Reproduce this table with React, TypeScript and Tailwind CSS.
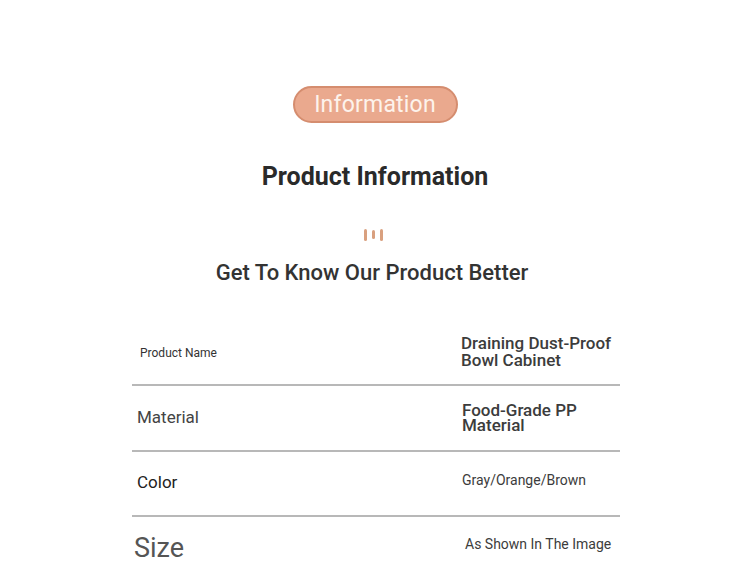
const rows = [
  { label: "Product Name", labelCls: "text-[12px] pl-2 mb-[4px] text-[#333]", value: "Draining Dust-Proof Bowl Cabinet", valueCls: "text-[17px] font-medium leading-[17px] w-[160px] pl-[1px] mb-[6px]", h: "h-[60px]" },
  { label: "Material", labelCls: "text-[17px] pl-[5px] text-[#444]", value: "Food-Grade PP Material", valueCls: "text-[17px] font-medium leading-[15px] w-[130px] pl-[2px]", h: "h-[66px]" },
  { label: "Color", labelCls: "text-[17px] pl-[5px] mb-[2px] text-[#222]", value: "Gray/Orange/Brown", valueCls: "text-[14px] pl-[2px] mb-[6px]", h: "h-[65px]" },
  { label: "Size", labelCls: "text-[27px] pl-[2px] text-[#555]", value: "As Shown In The Image", valueCls: "text-[14px] pl-[5px] mb-[8px]", h: "h-[62px]" },
];

export default function App() {
  return (
    <div className="w-[750px] h-[574px] bg-white overflow-hidden flex flex-col items-center font-['Roboto',sans-serif]">
      <div className="mt-[86px] w-[165px] h-[37px] rounded-full bg-[#eaa98e] border-2 border-[#d58d6f] flex items-center justify-center">
        <span className="text-[23px] mt-[2px] tracking-[0.2px] text-[#fdf3ec]">Information</span>
      </div>
      <h1 className="mt-[41px] text-[25px] font-bold text-[#2a2a2a] leading-none">Product Information</h1>
      <div className="mt-[40px] flex items-end gap-[5px] ml-[-4px]">
        <span className="w-[3px] h-[12px] rounded-full bg-[#d9a07f]" />
        <span className="w-[3px] h-[9px] mb-[2px] rounded-full bg-[#d9a07f]" />
        <span className="w-[3px] h-[12px] rounded-full bg-[#d9a07f]" />
      </div>
      <h2 className="mt-[21px] ml-[-6px] text-[22px] font-medium text-[#333] leading-none">Get To Know Our Product Better</h2>
      <div className="mt-[42px] w-[488px] ml-[2px] flex flex-col">
        {rows.map((r, i) => (
          <div key={r.label} className={`${r.h} flex items-center ${i < rows.length - 1 ? "border-b-2 border-[#b8b8b8]" : ""}`}>
            <div className={`flex-1 ${r.labelCls}`}>{r.label}</div>
            <div className="w-[160px] text-[#3c3c3c]">
              <div className={r.valueCls}>{r.value}</div>
            </div>
          </div>
        ))}
      </div>
    </div>
  );
}
